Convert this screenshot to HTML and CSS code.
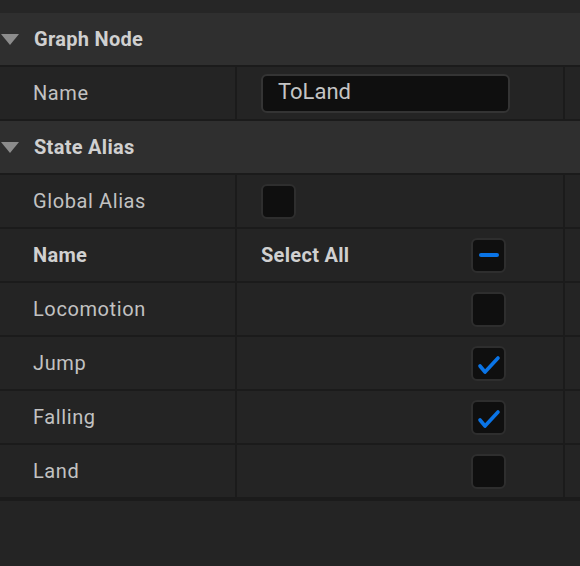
FILE: index.html
```html
<!DOCTYPE html>
<html>
<head>
<meta charset="utf-8">
<link rel="stylesheet" href="styles.css">
</head>
<body>
<div class="panel">
  <div class="topband"></div>

  <div class="header">
    <svg class="arrow" width="20" height="12" viewBox="0 0 20 12"><polygon points="1,0 19,0 10,11" fill="#8c8c8c"/></svg>
    <span class="htitle">Graph Node</span>
  </div>
  <div class="row">
    <div class="cell name">Name</div>
    <div class="cell value">
      <div class="input">ToLand</div>
    </div>
    <div class="cell extra"></div>
  </div>

  <div class="header">
    <svg class="arrow" width="20" height="12" viewBox="0 0 20 12"><polygon points="1,0 19,0 10,11" fill="#8c8c8c"/></svg>
    <span class="htitle">State Alias</span>
  </div>
  <div class="row">
    <div class="cell name">Global Alias</div>
    <div class="cell value">
      <div class="check"></div>
    </div>
    <div class="cell extra"></div>
  </div>
  <div class="row">
    <div class="cell name bold">Name</div>
    <div class="cell value split">
      <span class="sublabel bold">Select All</span>
      <div class="check">
        <span class="minus"></span>
      </div>
    </div>
    <div class="cell extra"></div>
  </div>
  <div class="row">
    <div class="cell name">Locomotion</div>
    <div class="cell value split">
      <span class="sublabel"></span>
      <div class="check"></div>
    </div>
    <div class="cell extra"></div>
  </div>
  <div class="row">
    <div class="cell name">Jump</div>
    <div class="cell value split">
      <span class="sublabel"></span>
      <div class="check">
        <svg width="31" height="31" viewBox="0 0 31 31"><polyline points="7,18 12,24 25,10" fill="none" stroke="#0a74e6" stroke-width="3.6" stroke-linecap="round" stroke-linejoin="round"/></svg>
      </div>
    </div>
    <div class="cell extra"></div>
  </div>
  <div class="row">
    <div class="cell name">Falling</div>
    <div class="cell value split">
      <span class="sublabel"></span>
      <div class="check">
        <svg width="31" height="31" viewBox="0 0 31 31"><polyline points="7,18 12,24 25,10" fill="none" stroke="#0a74e6" stroke-width="3.6" stroke-linecap="round" stroke-linejoin="round"/></svg>
      </div>
    </div>
    <div class="cell extra"></div>
  </div>
  <div class="row last">
    <div class="cell name">Land</div>
    <div class="cell value split">
      <span class="sublabel"></span>
      <div class="check"></div>
    </div>
    <div class="cell extra"></div>
  </div>
</div>
</body>
</html>
```
FILE: styles.css
```css
* { box-sizing: border-box; }
html, body {
  margin: 0;
  padding: 0;
  background: #242424;
  width: 580px;
  height: 566px;
  overflow: hidden;
  font-family: Roboto, "Liberation Sans", sans-serif;
  font-size: 20px;
  color: #c2c2c2;
}
.panel {
  display: flex;
  flex-direction: column;
}
.topband {
  height: 13px;
  background: #262626;
}
.header {
  height: 54px;
  background: #2f2f2f;
  border-bottom: 2px solid #1b1b1b;
  display: flex;
  align-items: center;
  gap: 14px;
}
.arrow {
  display: block;
  margin-top: 1px;
}
.htitle {
  font-weight: 700;
  color: #d0d0d0;
  letter-spacing: 0.3px;
  padding-bottom: 1px;
}
.row {
  height: 54px;
  border-bottom: 2px solid #1b1b1b;
  background: #242424;
  display: grid;
  grid-template-columns: 237px 328px 1fr;
}
.row.last {
  height: 56px;
  border-bottom: 4px solid #1b1b1b;
}
.cell {
  display: flex;
  align-items: center;
  height: 100%;
}
.name {
  padding-left: 33px;
  border-right: 2px solid #1b1b1b;
  padding-bottom: 1px;
  letter-spacing: 0.6px;
}
.value {
  padding-left: 24px;
  border-right: 2px solid #1b1b1b;
}
.bold {
  font-weight: 700;
  color: #d0d0d0;
  letter-spacing: 0.3px;
}
.split .sublabel {
  width: 210px;
  flex: none;
  padding-bottom: 1px;
}
.input {
  width: 249px;
  height: 39px;
  background: #0f0f0f;
  border: 2px solid #343434;
  border-radius: 6px;
  padding-left: 15px;
  display: flex;
  align-items: center;
  color: #c4c4c4;
  font-size: 22px;
  padding-bottom: 3px;
}
.check {
  width: 35px;
  height: 35px;
  background: #0f0f0f;
  border: 2px solid #2e2e2e;
  border-radius: 6px;
  display: flex;
  align-items: center;
  justify-content: center;
  flex: none;
}
.check svg { display: block; }
.minus {
  display: block;
  width: 20px;
  height: 4px;
  border-radius: 2px;
  background: #0a74e6;
}
```
